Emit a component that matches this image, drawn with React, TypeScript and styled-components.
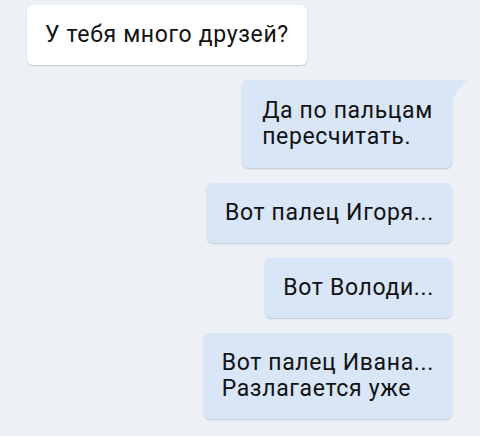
import React from "react";
import styled, { createGlobalStyle } from "styled-components";

const Global = createGlobalStyle`
  html, body { margin: 0; padding: 0; background: #edf0f4; }
  body { font-family: Roboto, "Noto Sans", sans-serif; }
`;

const Chat = styled.div`
  width: 480px;
  height: 436px;
  box-sizing: border-box;
  padding: 5px 28px 0 27px;
  display: flex;
  flex-direction: column;
  gap: 15px;
  background: #edf0f4;
  overflow: hidden;
`;

const Row = styled.div<{ $out?: boolean }>`
  display: flex;
  justify-content: ${(p) => (p.$out ? "flex-end" : "flex-start")};
`;

const Bubble = styled.div<{ $out?: boolean; $tail?: boolean }>`
  position: relative;
  box-sizing: border-box;
  padding: 17px 18px 17px 18px;
  border-radius: 6px;
  font-size: 23px;
  line-height: 26px;
  letter-spacing: 0.65px;
  color: #121212;
  background: ${(p) => (p.$out ? "#d8e6f7" : "#ffffff")};
  box-shadow: 0 1px 1.5px rgba(80, 100, 130, 0.28);
  ${(p) => (p.$tail ? "border-top-right-radius: 0; padding: 18px 19px 18px 20px;" : "")}
`;

const Tail = styled.svg`
  position: absolute;
  top: 0;
  right: -16px;
  width: 17px;
  height: 24px;
  overflow: visible;
`;

export default function App() {
  return (
    <>
      <Global />
      <Chat>
        <Row>
          <Bubble>У тебя много друзей?</Bubble>
        </Row>
        <Row $out>
          <Bubble $out $tail>
            Да по пальцам
            <br />
            пересчитать.
            <Tail viewBox="0 0 17 24">
              <path d="M0 0 H16 Q4 10 1 24 H0 Z" fill="#d8e6f7" />
            </Tail>
          </Bubble>
        </Row>
        <Row $out>
          <Bubble $out>Вот палец Игоря...</Bubble>
        </Row>
        <Row $out>
          <Bubble $out>Вот Володи...</Bubble>
        </Row>
        <Row $out>
          <Bubble $out>
            Вот палец Ивана...
            <br />
            Разлагается уже
          </Bubble>
        </Row>
      </Chat>
    </>
  );
}
